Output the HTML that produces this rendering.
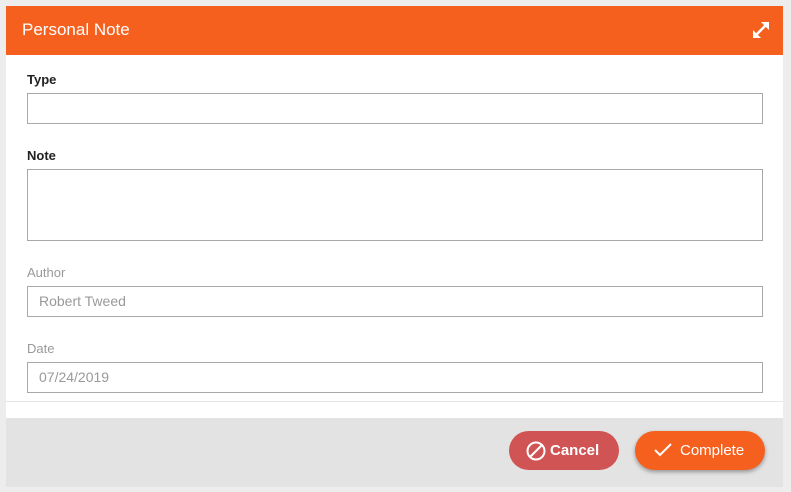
<!DOCTYPE html>
<html><head><style>
body{margin:0;width:791px;height:492px;background:#ededed;font-family:"Liberation Sans",sans-serif;position:relative;overflow:hidden}
.m{position:absolute;left:6px;top:6px;width:777px;height:481px;background:#fff}
.h{position:absolute;left:0;top:0;width:777px;height:49px;background:#f5601e;color:#fff;font-size:17px;line-height:47px;padding-left:16px;box-sizing:border-box}
.l{position:absolute;left:21px;font-size:13px;color:#222}
.l.g{color:#999}
.i{position:absolute;left:21px;width:736px;border:1px solid #a8a8a8;box-sizing:border-box;font-size:14px;color:#999;padding-left:11px}
.f{position:absolute;left:0;top:412px;width:777px;height:69px;background:#e3e3e3}
.b{position:absolute;top:425px;height:39px;border-radius:20px;color:#fff;font-size:15px;font-weight:bold;line-height:39px;box-sizing:border-box}
</style></head><body>
<div class="m">
<div class="h">Personal Note
<svg style="position:absolute;right:12px;top:14px" width="20" height="20" viewBox="0 0 20 20"><path d="M5 15L15 5" stroke="#fff" stroke-width="2.5"/><path d="M10 2h8v8zM2 10v8h8z" fill="#fff"/></svg></div>
<div class="l" style="top:66px;font-weight:bold">Type</div>
<div class="i" style="top:87px;height:31px"></div>
<div class="l" style="top:142px;font-weight:bold">Note</div>
<div class="i" style="top:163px;height:72px"></div>
<div class="l g" style="top:259px">Author</div>
<div class="i" style="top:280px;height:31px;line-height:29px">Robert Tweed</div>
<div class="l g" style="top:335px">Date</div>
<div class="i" style="top:356px;height:31px;line-height:29px">07/24/2019</div>
<div style="position:absolute;left:0;top:395px;width:777px;border-top:1px solid #e5e5e5"></div>
<div class="f"></div>
<div class="b" style="left:503px;width:110px;background:#d05454;padding-left:17px">
<svg style="position:absolute;left:17px;top:10px" width="20" height="20" viewBox="0 0 20 20"><circle cx="10" cy="10" r="8.5" stroke="#fff" stroke-width="2" fill="none"/><path d="M4 16L16 4" stroke="#fff" stroke-width="2"/></svg><span style="margin-left:24px">Cancel</span></div>
<div class="b" style="left:629px;width:130px;background:#f5601e;font-weight:normal;box-shadow:0 2px 4px rgba(0,0,0,.35)">
<svg style="position:absolute;left:19px;top:12px" width="18" height="15" viewBox="0 0 18 15"><path d="M1 7l5 5L17 1" stroke="#fff" stroke-width="2" fill="none"/></svg><span style="margin-left:45px">Complete</span></div>
</div>
</body></html>
